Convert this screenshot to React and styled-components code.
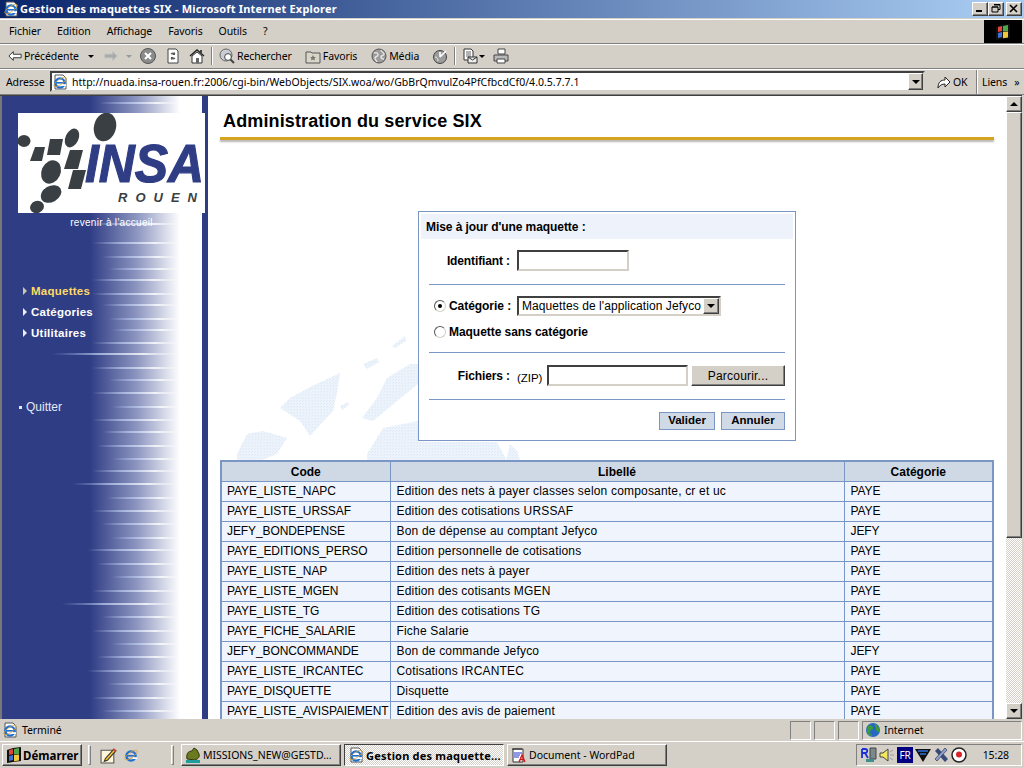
import React from "react";
import styled, { createGlobalStyle, css } from "styled-components";

const GlobalStyle = createGlobalStyle`
  html, body { margin: 0; padding: 0; overflow: hidden; background: #d4d0c8; }
  * { box-sizing: border-box; }
`;

const uiFont = `"Noto Sans", "DejaVu Sans", sans-serif`;
const pageFont = `"Liberation Sans", Arial, sans-serif`;

const raised = css`
  border: 1px solid;
  border-color: #fff #404040 #404040 #fff;
  box-shadow: inset -1px -1px 0 #808080;
  background: #d4d0c8;
`;
const sunken = css`
  border: 1px solid;
  border-color: #808080 #fff #fff #808080;
`;
const dither = css`
  background-image: conic-gradient(#d4d0c8 25%, #fff 0 50%, #d4d0c8 0 75%, #fff 0);
  background-size: 2px 2px;
`;

const Desktop = styled.div`
  width: 1024px;
  height: 768px;
  display: flex;
  flex-direction: column;
  overflow: hidden;
  background: #d4d0c8;
  font-family: ${uiFont};
  font-size: 10.5px;
  letter-spacing: -0.1px;
  color: #000;
`;

/* title bar */
const TitleBar = styled.div`
  height: 19px;
  flex: none;
  display: flex;
  align-items: center;
  padding: 0 2px 1px 3px;
  background: linear-gradient(90deg, #0a246a 0%, #a6caf0 97%);
  border-bottom: 1px solid #d4d0c8;
`;
const TitleText = styled.span`
  margin-left: 1px;
  color: #fff;
  font-weight: 700;
  font-size: 11px;
  letter-spacing: 0.19px;
  flex: 1;
  white-space: nowrap;
`;
const WinButton = styled.button`
  ${raised}
  width: 16px;
  height: 14px;
  padding: 0;
  margin-left: ${p => p.$gap || 0}px;
  display: flex;
  align-items: center;
  justify-content: center;
`;

/* menu */
const MenuBar = styled.div`
  height: 25px;
  flex: none;
  display: flex;
  align-items: center;
  gap: 16px;
  padding-left: 9px;
  border-top: 1px solid #fff;
  border-bottom: 1px solid #808080;
`;
const MenuItem = styled.span`
  white-space: nowrap;
  margin-top: -2px;
`;
const BrandBox = styled.div`
  margin-left: auto;
  margin-right: 2px;
  width: 38px;
  height: 23px;
  background: #000;
  display: flex;
  align-items: center;
  justify-content: center;
`;

/* toolbar */
const ToolBar = styled.div`
  height: 25px;
  flex: none;
  display: flex;
  align-items: center;
  padding-left: 8px;
  padding-bottom: 1px;
  border-top: 1px solid #fff;
  border-bottom: 1px solid #808080;
`;
const Tool = styled.span`
  display: inline-flex;
  align-items: center;
  gap: 2px;
  margin-left: ${p => p.$gap || 0}px;
  color: ${p => (p.$off ? "#9a9a9a" : "#000")};
  white-space: nowrap;
`;
const ToolSep = styled.span`
  width: 2px;
  height: 18px;
  margin-left: ${p => p.$gap}px;
  border-left: 1px solid #808080;
  border-right: 1px solid #fff;
`;
const Caret = styled.span`
  width: 0;
  height: 0;
  margin-left: ${p => p.$gap || 0}px;
  border-left: 3px solid transparent;
  border-right: 3px solid transparent;
  border-top: 3px solid ${p => (p.$off ? "#9a9a9a" : "#000")};
`;

/* address */
const AddressBar = styled.div`
  height: 26px;
  flex: none;
  display: flex;
  align-items: center;
  padding-left: 6px;
  padding-bottom: 1px;
  border-top: 1px solid #fff;
  border-bottom: 1px solid #808080;
`;
const AddressLabel = styled.span`
  width: 38px;
  flex: none;
  white-space: nowrap;
`;
const AddressField = styled.div`
  width: 875px;
  height: 21px;
  margin-left: 6px;
  display: flex;
  align-items: center;
  background: #fff;
  border: 2px solid;
  border-color: #404040 #d4d0c8 #d4d0c8 #404040;
`;
const UrlText = styled.span`
  margin-left: 4px;
  flex: 1;
  white-space: nowrap;
  letter-spacing: 0.02px;
`;
const ComboButton = styled.span`
  ${raised}
  width: ${p => p.$w || 15}px;
  height: 100%;
  display: flex;
  align-items: center;
  justify-content: center;
  flex: none;
`;
const ComboArrow = styled.span`
  width: 0;
  height: 0;
  border-left: 4px solid transparent;
  border-right: 4px solid transparent;
  border-top: 4px solid #000;
`;
const GoButton = styled.span`
  display: inline-flex;
  align-items: center;
  gap: 1px;
  margin-left: 11px;
  width: 40px;
`;
const BarDivider = styled.span`
  width: 2px;
  height: 24px;
  border-left: 1px solid #808080;
  border-right: 1px solid #fff;
`;
const Links = styled.span`
  margin-left: 4px;
  display: inline-flex;
  gap: 7px;
`;

/* browser viewport */
const Viewport = styled.div`
  height: 624px;
  flex: none;
  display: flex;
  overflow: hidden;
  background: #fff;
  border-top: 1px solid #404040;
  margin-right: 2px;
`;

const Sidebar = styled.aside`
  position: relative;
  width: 208px;
  flex: none;
  padding: 17px 0 0 16px;
  border-left: 2px solid #777;
  border-right: 6px solid #2f3d85;
  background: linear-gradient(90deg, #2f3d85 0, #2f3d85 88px, #8d96c0 135px, #fff 178px);
  font-family: ${pageFont};
  letter-spacing: 0;
`;
const Stripes = styled.svg`
  position: absolute;
  left: 0;
  top: 0;
`;
const LogoBox = styled.div`
  position: relative;
  width: 187px;
  height: 100px;
  background: #fff;
  margin-right: -3px;
`;
const HomeLink = styled.div`
  position: relative;
  width: 187px;
  margin-top: 3px;
  text-align: center;
  color: #fff;
  font-size: 10px;
  letter-spacing: 0.3px;
  line-height: 13px;
`;
const Nav = styled.nav`
  position: relative;
  margin-top: 54px;
  margin-left: 5px;
  display: flex;
  flex-direction: column;
  gap: 5px;
`;
const NavItem = styled.div`
  display: flex;
  align-items: center;
  gap: 4px;
  height: 16px;
  font-size: 11.5px;
  font-weight: 700;
  letter-spacing: 0.25px;
  color: ${p => (p.$active ? "#ffd966" : "#fff")};
  &::before {
    content: "";
    border-left: 4px solid ${p => (p.$active ? "#c9c9b0" : "#eef")};
    border-top: 4px solid transparent;
    border-bottom: 4px solid transparent;
  }
`;
const QuitItem = styled.div`
  position: relative;
  margin-top: 59px;
  margin-left: 1px;
  display: flex;
  align-items: center;
  gap: 4px;
  color: #e6e9f5;
  font-size: 12px;
  &::before {
    content: "";
    width: 3px;
    height: 3px;
    background: #e6e9f5;
  }
`;

const Main = styled.main`
  position: relative;
  width: 798px;
  flex: none;
  font-family: ${pageFont};
  font-size: 12px;
  letter-spacing: 0;
`;
const WorldMap = styled.svg`
  position: absolute;
  left: 0;
  top: 0;
`;
const PageHead = styled.header`
  position: relative;
  margin-left: 12px;
  width: 774px;
  padding-top: 13px;
`;
const PageTitle = styled.h1`
  margin: 0 0 0 3px;
  font-size: 18px;
  line-height: 24px;
  font-weight: 700;
  letter-spacing: 0.13px;
`;
const TitleRule = styled.div`
  height: 3px;
  margin-top: 4px;
  background: #d6a51f;
  box-shadow: 0 2px 2px #b5b5b5;
`;

const Panel = styled.form`
  position: relative;
  width: 378px;
  height: 230px;
  margin: 71px 0 0 210px;
  padding: 2px;
  background: #fff;
  border: 1px solid #7a96c4;
`;
const PanelHead = styled.div`
  height: 25px;
  padding-left: 5px;
  display: flex;
  align-items: center;
  background: #eef3fb;
  font-weight: 700;
  letter-spacing: -0.07px;
`;
const PanelBody = styled.div`
  padding: 0 8px;
`;
const Row = styled.div`
  display: flex;
  align-items: center;
  height: ${p => p.$h}px;
  margin-top: ${p => p.$top}px;
  padding-left: ${p => p.$indent || 0}px;
  font-weight: 700;
  letter-spacing: -0.05px;
`;
const FieldLabel = styled.label`
  width: 81px;
  text-align: right;
  font-weight: 700;
  letter-spacing: -0.12px;
  flex: none;
`;
const RadioLabel = styled.label`
  width: 61px;
  flex: none;
  white-space: nowrap;
`;
const Sep = styled.hr`
  margin: ${p => p.$top}px 0 0;
  height: 1px;
  border: 0;
  background: #7a96c4;
`;
const TextInput = styled.input`
  display: block;
  width: ${p => p.$w}px;
  height: 100%;
  margin-left: ${p => p.$gap}px;
  padding: 0;
  background: #fff;
  border: 2px solid;
  border-color: #404040 #d4d0c8 #d4d0c8 #404040;
  outline: 0;
`;
const Radio = styled.span`
  width: 12px;
  height: 12px;
  flex: none;
  margin-right: 3px;
  border-radius: 50%;
  border: 1px solid;
  border-color: #555 #d4d0c8 #d4d0c8 #555;
  background: #fff;
  display: flex;
  align-items: center;
  justify-content: center;
  &::after {
    content: "";
    width: 4px;
    height: 4px;
    border-radius: 50%;
    background: ${p => (p.$on ? "#000" : "transparent")};
  }
`;
const SelectBox = styled.div`
  width: 204px;
  height: 100%;
  margin-left: 7px;
  padding-left: 3px;
  display: flex;
  align-items: center;
  justify-content: space-between;
  background: #fff;
  border: 2px solid;
  border-color: #404040 #d4d0c8 #d4d0c8 #404040;
  font-weight: 400;
  font-size: 12px;
  letter-spacing: 0.08px;
  white-space: nowrap;
`;
const ZipHint = styled.span`
  width: 26px;
  margin: 4px 0 0 7px;
  flex: none;
  font-weight: 400;
  font-size: 11.5px;
  white-space: nowrap;
`;
const BrowseButton = styled.button`
  ${raised}
  width: 94px;
  height: 100%;
  margin-left: 3px;
  padding: 0;
  font: 12px ${pageFont};
  letter-spacing: 0.2px;
  color: #000;
`;
const ActionRow = styled.div`
  display: flex;
  justify-content: flex-end;
  gap: 6px;
  margin-top: 12px;
`;
const ActionButton = styled.button`
  width: ${p => p.$w}px;
  height: 18px;
  padding: 0 0 2px;
  background: #cfdae6;
  border: 1px solid #7a96c4;
  font: 700 11.5px ${pageFont};
  color: #000;
`;

const DataTable = styled.table`
  position: relative;
  width: 772px;
  margin: 19px 0 0 12px;
  table-layout: fixed;
  border-collapse: collapse;
  border: 2px solid #7a96c4;
  font-size: 12px;
  background: #f0f5fd;
`;
const HeadCell = styled.th`
  height: 20px;
  padding: 1px 0 0;
  font-weight: 700;
  background: #cfd9e6;
  border: 1px solid #7a96c4;
  width: ${p => p.$w}px;
`;
const Cell = styled.td`
  height: 20px;
  padding: 0 0 0 ${p => p.$inset}px;
  border: 1px solid #7a96c4;
  white-space: nowrap;
  overflow: hidden;
  letter-spacing: ${p => p.$track}px;
`;

const ScrollBar = styled.div`
  width: 16px;
  flex: none;
  display: flex;
  flex-direction: column;
  ${dither}
`;
const ScrollButton = styled.span`
  ${raised}
  height: 16px;
  flex: none;
  display: flex;
  align-items: center;
  justify-content: center;
`;
const ScrollThumb = styled.span`
  ${raised}
  height: 426px;
  flex: none;
`;
const ScrollTrack = styled.span`
  flex: 1;
`;
const Triangle = styled.span`
  width: 0;
  height: 0;
  border-left: 4px solid transparent;
  border-right: 4px solid transparent;
  ${p => (p.$down ? "border-top: 4px solid #000;" : "border-bottom: 4px solid #000;")}
`;

/* status bar */
const StatusBar = styled.div`
  height: 23px;
  flex: none;
  display: flex;
  align-items: center;
  padding: 1px 2px 1px 2px;
  gap: 3px;
  border-bottom: 1px solid #fff;
`;
const StatusMain = styled.div`
  flex: 1;
  display: flex;
  align-items: center;
  gap: 4px;
`;
const StatusCell = styled.div`
  ${sunken}
  width: ${p => p.$w}px;
  height: 19px;
  display: flex;
  align-items: center;
  gap: 3px;
  padding-left: 2px;
  flex: none;
`;

/* task bar */
const TaskBar = styled.div`
  height: 26px;
  flex: none;
  display: flex;
  align-items: center;
  padding: 0 2px;
`;
const StartButton = styled.button`
  ${raised}
  width: 80px;
  height: 22px;
  padding: 0 0 0 3px;
  display: flex;
  align-items: center;
  gap: 1px;
  font: 700 11.5px ${uiFont};
  color: #000;
`;
const Grip = styled.span`
  width: 3px;
  height: 20px;
  margin-left: ${p => p.$gap}px;
  flex: none;
  border: 1px solid;
  border-color: #fff #808080 #808080 #fff;
`;
const QuickIcon = styled.span`
  display: inline-flex;
  margin-left: ${p => p.$gap}px;
`;
const TaskButton = styled.button`
  ${p => (p.$active ? sunken : raised)}
  ${p => p.$active && "border-color: #404040 #fff #fff #404040;"}
  ${p => p.$active && dither}
  width: ${p => p.$w}px;
  height: 22px;
  margin-left: ${p => p.$gap}px;
  padding: 0 0 0 3px;
  flex: none;
  display: flex;
  align-items: center;
  gap: 2px;
  font: ${p => (p.$active ? "700 11px" : "400 10.5px")} ${uiFont};
  letter-spacing: ${p => (p.$active ? "0.2px" : "0")};
  color: #000;
  white-space: nowrap;
  overflow: hidden;
`;
const Tray = styled.div`
  ${sunken}
  margin-left: auto;
  width: 166px;
  height: 22px;
  display: flex;
  align-items: center;
  padding-left: 4px;
  gap: 2px;
`;
const Clock = styled.span`
  margin-left: auto;
  margin-right: 12px;
`;
const LangBadge = styled.span`
  width: 16px;
  height: 16px;
  background: #000080;
  color: #fff;
  font-size: 10px;
  display: flex;
  align-items: center;
  justify-content: center;
`;

/* drawings */
const Icon = ({ s = 16, children }) => (
  <svg width={s} height={s} viewBox="0 0 16 16" style={{ flex: "none" }}>{children}</svg>
);

const BlueE = () => (
  <g>
    <circle cx="8" cy="9" r="4.6" fill="none" stroke="#1d6fd1" strokeWidth="2.4" />
    <rect x="4" y="8" width="9" height="1.6" fill="#1d6fd1" />
    <rect x="10" y="10.2" width="4" height="1.8" fill="#fff" />
    <ellipse cx="8" cy="8" rx="7.4" ry="2.6" transform="rotate(-35 8 8)" fill="none" stroke="#e0a030" strokeWidth=".7" />
  </g>
);
const IePage = () => (
  <Icon>
    <path d="M3 1h8l3 3v11H3z" fill="#fff" stroke="#555" />
    <BlueE />
  </Icon>
);
const IeBare = () => (
  <Icon><BlueE /></Icon>
);
const BackIcon = () => (
  <Icon s={14}><path d="M1 8l5-5v3h9v4H6v3z" fill="#fff" stroke="#222" /></Icon>
);
const ForwardIcon = () => (
  <Icon s={14}><path d="M15 8l-5-5v3H1v4h9v3z" fill="#aaa" stroke="#bbb" /></Icon>
);
const StopIcon = () => (
  <Icon>
    <circle cx="8" cy="8" r="7.5" fill="#8b8b8b" stroke="#555" />
    <path d="M5 5l6 6M11 5l-6 6" stroke="#fff" strokeWidth="2" />
  </Icon>
);
const RefreshIcon = () => (
  <Icon>
    <path d="M3 1h8l2 2v12H3z" fill="#fff" stroke="#444" />
    <path d="M6 6a3 3 0 0 1 4 0M10 10a3 3 0 0 1-4 0" fill="none" stroke="#555" strokeWidth="1.3" />
    <path d="M10 4v3H7zM6 12V9h3z" fill="#555" />
  </Icon>
);
const HomeIcon = () => (
  <Icon>
    <path d="M1 8l7-6 7 6" fill="none" stroke="#222" strokeWidth="1.4" />
    <path d="M3 8v7h10V8L8 4z" fill="#fff" stroke="#333" />
    <rect x="7" y="10" width="3" height="5" fill="#666" />
    <rect x="11" y="2" width="2" height="4" fill="#444" />
  </Icon>
);
const SearchIcon = () => (
  <Icon>
    <circle cx="7" cy="7" r="6" fill="#c9ccd2" stroke="#666" />
    <circle cx="9" cy="9" r="3.4" fill="#fff" stroke="#444" />
    <path d="M11.5 11.5L15 15" stroke="#444" strokeWidth="2" />
  </Icon>
);
const FavIcon = () => (
  <Icon>
    <path d="M1 4h5l1 1h8v10H1z" fill="#d9d6c8" stroke="#555" />
    <path d="M8 7l1 2 2 .2-1.500 1.400.5 2L8 11.500 6 12.600l.5-2L5 9.200 7 9z" fill="#777" />
  </Icon>
);
const GlobeGray = () => (
  <Icon>
    <circle cx="8" cy="8" r="7" fill="#9c9c9c" stroke="#555" />
    <path d="M3 5c2-1 4 0 4 2s-3 1-3 3 2 3 2 4M10 2c0 2 3 2 3 4s-3 1-3 3 2 2 3 2" fill="none" stroke="#e5e5e5" strokeWidth="1.4" />
  </Icon>
);
const HistoryIcon = () => (
  <Icon>
    <circle cx="8" cy="9" r="6.500" fill="#9c9c9c" stroke="#444" />
    <path d="M8 9l6-6M8 9V4" stroke="#fff" strokeWidth="1.6" />
    <path d="M3 9c2 0 3 2 3 4" stroke="#eee" fill="none" />
  </Icon>
);
const MailIcon = () => (
  <Icon>
    <path d="M2 1h7l2 2v9H2z" fill="#fff" stroke="#333" />
    <path d="M4 4h5M4 6h5M4 8h5" stroke="#666" />
    <path d="M6 9h9v6H6z" fill="#eee" stroke="#333" />
    <path d="M6 9l4.500 3L15 9" fill="none" stroke="#333" />
  </Icon>
);
const PrintIcon = () => (
  <Icon>
    <path d="M5 1h7v5H5z" fill="#fff" stroke="#444" />
    <path d="M1 7h14v6H1z" fill="#b9b9b9" stroke="#444" />
    <path d="M4 11h8v4H4z" fill="#fff" stroke="#444" />
  </Icon>
);
const GoIcon = () => (
  <Icon>
    <path d="M2 14c0-6 3-8 7-8V3l5 5-5 5v-3c-3 0-5 1-7 4z" fill="#fff" stroke="#222" />
  </Icon>
);
const Flag = () => (
  <Icon>
    <path d="M1 3l6-2 8-1v14l-8 1-6 1z" fill="#111" />
    <path d="M3 3l4-1v5l-4 1z" fill="#e2453a" />
    <path d="M8 2l5-1v6l-5 .600z" fill="#4ea84a" />
    <path d="M3 9l4-1v5l-4 1z" fill="#3f74d6" />
    <path d="M8 8l5-.500v6l-5 .800z" fill="#f2c73a" />
  </Icon>
);
const GlobeIcon = () => (
  <Icon>
    <circle cx="8" cy="8" r="7" fill="#2468c4" />
    <path d="M3 4c3-2 5 0 5 2s-3 2-3 4 2 2 2 4c-3 0-5-3-5-6zM10 2c3 1 5 4 4 8-2 0-3-1-3-3s-2-3-1-5z" fill="#3c9a38" />
  </Icon>
);
const FrogIcon = () => (
  <Icon>
    <path d="M2 12c-1-5 1-8 5-8l2-3 3 2 2 4c1 3-1 5-4 6z" fill="#6b7a1e" stroke="#2e3608" />
    <path d="M1 13h14v3H1z" fill="#1f9c9c" />
  </Icon>
);
const NoteIcon = () => (
  <Icon s={17}>
    <path d="M1 3h12v12H1z" fill="#fff6d8" stroke="#555" />
    <path d="M5 11l8-9 2 1.500-8 9-3 1z" fill="#f4c430" stroke="#333" />
    <path d="M12.500 2l2.500 2" stroke="#d43" strokeWidth="2" />
  </Icon>
);
const PadIcon = () => (
  <Icon>
    <path d="M2 2h10v13H2z" fill="#fff" stroke="#333" />
    <path d="M2 1v2M4 1v2M6 1v2M8 1v2M10 1v2" stroke="#222" />
    <path d="M3 6h8M3 8h6M3 10h5" stroke="#2233cc" />
    <path d="M8 15l3-7 3 7M9.500 12.500h3" fill="none" stroke="#d01818" strokeWidth="1.400" />
  </Icon>
);
const TrayMonitor = () => (
  <Icon>
    <path d="M9 1h6v11H9z" fill="#7a8a8a" stroke="#444" />
    <path d="M1 2h3c3 0 3 4 0 4l3 5M1 2v9M1 6h3" fill="none" stroke="#1b2fd8" strokeWidth="1.800" />
    <path d="M5 12h8v3H5z" fill="#3f8f8f" />
  </Icon>
);
const TraySpeaker = () => (
  <Icon>
    <path d="M1 6h3l5-4v12l-5-4H1z" fill="#f5e85a" stroke="#444" />
    <path d="M11 5l3-2M11 8h4M11 11l3 2" stroke="#999" />
  </Icon>
);
const TrayShield = () => (
  <Icon>
    <path d="M0 2h16L8 15z" fill="#111" />
    <path d="M3 4h10M5 7h6" stroke="#2c6fe0" strokeWidth="1.500" />
  </Icon>
);
const TrayTool = () => (
  <Icon>
    <path d="M2 4l3-3 10 11-3 3z" fill="#3a4a78" />
    <path d="M12 1l2 2L4 14l-2-2z" fill="#8aa0d0" stroke="#223" strokeWidth=".6" />
  </Icon>
);
const TrayDisc = () => (
  <Icon>
    <circle cx="8" cy="8" r="7" fill="#fff" stroke="#222" strokeWidth="1.500" />
    <circle cx="8" cy="7.500" r="3" fill="#d8232a" />
  </Icon>
);

const Logo = () => (
  <svg width="187" height="100" viewBox="0 0 187 100">
    <g fill="#3a3f44">
      <ellipse cx="87" cy="14" rx="11" ry="14.500" transform="rotate(15 87 14)" />
      <ellipse cx="6" cy="28" rx="6.500" ry="6" />
      <ellipse cx="54" cy="25" rx="6.500" ry="10" transform="rotate(25 54 25)" />
      <polygon points="17,34 27,34 24,48 12,48" />
      <polygon points="32,26 45,26 42,42 29,42" />
      <polygon points="52,37 65,37 60,56 46,56" />
      <polygon points="55,57 68,57 63,76 50,76" />
      <ellipse cx="33" cy="59" rx="9.500" ry="12" transform="rotate(25 33 59)" />
      <ellipse cx="33" cy="81" rx="11" ry="8" transform="rotate(-30 33 81)" />
      <ellipse cx="19" cy="94" rx="7" ry="6" transform="rotate(-20 19 94)" />
    </g>
    <text x="67" y="69" textLength="119" lengthAdjust="spacingAndGlyphs" fontFamily={pageFont} fontWeight="700" fontStyle="italic" fontSize="54" fill="#2f3d85" stroke="#2f3d85" strokeWidth="1.2">INSA</text>
    <text x="100" y="89" fontFamily={pageFont} fontWeight="700" fontStyle="italic" fontSize="13" letterSpacing="8" fill="#3a3f44">ROUEN</text>
  </svg>
);

const stripeRows = [
  [6, 97], [127, 90], [146, 90], [160, 100], [172, 107], [183, 90], [197, 90], [208, 100],
  [222, 107], [233, 110], [246, 90], [257, 50], [271, 90], [283, 107], [296, 90], [310, 110],
  [323, 90], [335, 100], [349, 95], [362, 110], [374, 90], [387, 70], [401, 105], [414, 90],
  [427, 100], [441, 110], [453, 85], [467, 95], [480, 110], [494, 90], [507, 60], [520, 100],
  [534, 90], [547, 110], [560, 95], [574, 85], [587, 105], [601, 90], [614, 100],
];

const SidebarStripes = () => (
  <Stripes width="200" height="623" viewBox="0 0 200 623">
    <defs>
      <linearGradient id="stripe">
        <stop offset="0" stopColor="#a8bce8" stopOpacity="0" />
        <stop offset=".35" stopColor="#b8c8ee" stopOpacity=".75" />
        <stop offset=".7" stopColor="#fff" stopOpacity=".8" />
        <stop offset="1" stopColor="#fff" stopOpacity="0" />
      </linearGradient>
    </defs>
    {stripeRows.map(([y, x]) => (
      <rect key={y} x={x} y={y} width={180 - x} height="2" fill="url(#stripe)" />
    ))}
  </Stripes>
);

const MapBackdrop = () => (
  <WorldMap width="798" height="623" viewBox="208 95 798 623">
    <defs>
      <pattern id="speckle" width="3" height="3" patternUnits="userSpaceOnUse">
        <rect width="3" height="3" fill="#edf3fb" />
        <rect width="1" height="1" fill="#dce8f6" />
        <rect x="2" y="1" width="1" height="1" fill="#e2ecf8" />
      </pattern>
    </defs>
    <g fill="url(#speckle)">
      <path d="M280 407l10-10 22-12 28-13-3 20-4 18-23 25-10-15z" />
      <path d="M237 453l10-20 16-3 24 7-10 16-17 7h-23z" />
      <path d="M362 417l15-20 10-20 23-14 8 0v20l-21 17-24 20z" />
      <path d="M367 453l16-26 35-7v21h79l10 19H367z" />
      <path d="M363 363l14-6 2 4-12 7z" />
      <path d="M392 345l13-10 1 5-11 7z" />
      <path d="M510 443l8 8 2 9h-14z" />
      <path d="M340 405l8-4 1 3-7 5z" />
    </g>
  </WorldMap>
);

const rows = [
  ["PAYE_LISTE_NAPC", "Edition des nets à payer classes selon composante, cr et uc", "PAYE"],
  ["PAYE_LISTE_URSSAF", "Edition des cotisations URSSAF", "PAYE"],
  ["JEFY_BONDEPENSE", "Bon de dépense au comptant Jefyco", "JEFY"],
  ["PAYE_EDITIONS_PERSO", "Edition personnelle de cotisations", "PAYE"],
  ["PAYE_LISTE_NAP", "Edition des nets à payer", "PAYE"],
  ["PAYE_LISTE_MGEN", "Edition des cotisants MGEN", "PAYE"],
  ["PAYE_LISTE_TG", "Edition des cotisations TG", "PAYE"],
  ["PAYE_FICHE_SALARIE", "Fiche Salarie", "PAYE"],
  ["JEFY_BONCOMMANDE", "Bon de commande Jefyco", "JEFY"],
  ["PAYE_LISTE_IRCANTEC", "Cotisations IRCANTEC", "PAYE"],
  ["PAYE_DISQUETTE", "Disquette", "PAYE"],
  ["PAYE_LISTE_AVISPAIEMENT", "Edition des avis de paiement", "PAYE"],
];

const menus = ["Fichier", "Edition", "Affichage", "Favoris", "Outils", "?"];

export default function App() {
  return (
    <Desktop>
      <GlobalStyle />
      <TitleBar>
        <IePage />
        <TitleText>Gestion des maquettes SIX - Microsoft Internet Explorer</TitleText>
        <WinButton>
          <svg width="10" height="9"><rect x="1" y="6" width="6" height="2" /></svg>
        </WinButton>
        <WinButton>
          <svg width="10" height="9"><path d="M3 .5h6v5H7M1 3h6v5H1z" fill="none" stroke="#000" /><path d="M3 1h6M1 3h6" stroke="#000" /></svg>
        </WinButton>
        <WinButton $gap={2}>
          <svg width="10" height="9"><path d="M1 1l7 7M8 1l-7 7" stroke="#000" strokeWidth="1.600" /></svg>
        </WinButton>
      </TitleBar>

      <MenuBar>
        {menus.map(label => (
          <MenuItem key={label}>{label}</MenuItem>
        ))}
        <BrandBox><Flag /></BrandBox>
      </MenuBar>

      <ToolBar>
        <Tool><BackIcon />Précédente</Tool>
        <Caret $gap={9} />
        <Tool $gap={10} $off><ForwardIcon /></Tool>
        <Caret $gap={8} $off />
        <Tool $gap={8}><StopIcon /></Tool>
        <Tool $gap={9}><RefreshIcon /></Tool>
        <Tool $gap={8}><HomeIcon /></Tool>
        <ToolSep $gap={6} />
        <Tool $gap={6}><SearchIcon />Rechercher</Tool>
        <Tool $gap={13}><FavIcon />Favoris</Tool>
        <Tool $gap={14}><GlobeGray />Média</Tool>
        <Tool $gap={13}><HistoryIcon /></Tool>
        <ToolSep $gap={6} />
        <Tool $gap={6}><MailIcon /></Tool>
        <Caret $gap={1} />
        <Tool $gap={8}><PrintIcon /></Tool>
      </ToolBar>

      <AddressBar>
        <AddressLabel>Adresse</AddressLabel>
        <AddressField>
          <IePage />
          <UrlText>http://nuada.insa-rouen.fr:2006/cgi-bin/WebObjects/SIX.woa/wo/GbBrQmvulZo4PfCfbcdCf0/4.0.5.7.7.1</UrlText>
          <ComboButton><ComboArrow /></ComboButton>
        </AddressField>
        <GoButton><GoIcon />OK</GoButton>
        <BarDivider />
        <Links>Liens <span>»</span></Links>
      </AddressBar>

      <Viewport>
        <Sidebar>
          <SidebarStripes />
          <LogoBox><Logo /></LogoBox>
          <HomeLink>revenir à l'accueil</HomeLink>
          <Nav>
            <NavItem $active>Maquettes</NavItem>
            <NavItem>Catégories</NavItem>
            <NavItem>Utilitaires</NavItem>
          </Nav>
          <QuitItem>Quitter</QuitItem>
        </Sidebar>

        <Main>
          <MapBackdrop />
          <PageHead>
            <PageTitle>Administration du service SIX</PageTitle>
            <TitleRule />
          </PageHead>

          <Panel>
            <PanelHead>Mise à jour d'une maquette :</PanelHead>
            <PanelBody>
              <Row $h={21} $top={11}>
                <FieldLabel>Identifiant :</FieldLabel>
                <TextInput $w={112} $gap={7} />
              </Row>
              <Sep $top={13} />
              <Row $h={20} $top={11} $indent={5}>
                <Radio $on />
                <RadioLabel>Catégorie :</RadioLabel>
                <SelectBox>
                  Maquettes de l'application Jefyco
                  <ComboButton $w={16}><ComboArrow /></ComboButton>
                </SelectBox>
              </Row>
              <Row $h={16} $top={8} $indent={5}>
                <Radio />
                Maquette sans catégorie
              </Row>
              <Sep $top={12} />
              <Row $h={21} $top={12}>
                <FieldLabel>Fichiers :</FieldLabel>
                <ZipHint>(ZIP)</ZipHint>
                <TextInput $w={141} $gap={4} />
                <BrowseButton type="button">Parcourir...</BrowseButton>
              </Row>
              <Sep $top={13} />
              <ActionRow>
                <ActionButton type="button" $w={56}>Valider</ActionButton>
                <ActionButton type="button" $w={64}>Annuler</ActionButton>
              </ActionRow>
            </PanelBody>
          </Panel>

          <DataTable>
            <thead>
              <tr>
                <HeadCell $w={169}>Code</HeadCell>
                <HeadCell $w={454}>Libellé</HeadCell>
                <HeadCell $w={149}>Catégorie</HeadCell>
              </tr>
            </thead>
            <tbody>
              {rows.map(([code, label, cat]) => (
                <tr key={code}>
                  <Cell $inset={5} $track={-0.1}>{code}</Cell>
                  <Cell $inset={6} $track={0.18}>{label}</Cell>
                  <Cell $inset={6} $track={-0.1}>{cat}</Cell>
                </tr>
              ))}
            </tbody>
          </DataTable>
        </Main>

        <ScrollBar>
          <ScrollButton><Triangle /></ScrollButton>
          <ScrollThumb />
          <ScrollTrack />
          <ScrollButton><Triangle $down /></ScrollButton>
        </ScrollBar>
      </Viewport>

      <StatusBar>
        <StatusMain><IePage />Terminé</StatusMain>
        <StatusCell $w={21} />
        <StatusCell $w={21} />
        <StatusCell $w={21} />
        <StatusCell $w={160}><GlobeIcon />Internet</StatusCell>
      </StatusBar>

      <TaskBar>
        <StartButton><Flag />Démarrer</StartButton>
        <Grip $gap={6} />
        <QuickIcon $gap={9}><NoteIcon /></QuickIcon>
        <QuickIcon $gap={6}><IeBare /></QuickIcon>
        <Grip $gap={32} />
        <TaskButton $w={160} $gap={7}><FrogIcon />MISSIONS_NEW@GESTD...</TaskButton>
        <TaskButton $w={160} $gap={3} $active><IePage />Gestion des maquette...</TaskButton>
        <TaskButton $w={160} $gap={3}><PadIcon />Document - WordPad</TaskButton>
        <Tray>
          <TrayMonitor />
          <TraySpeaker />
          <LangBadge>FR</LangBadge>
          <TrayShield />
          <TrayTool />
          <TrayDisc />
          <Clock>15:28</Clock>
        </Tray>
      </TaskBar>
    </Desktop>
  );
}
